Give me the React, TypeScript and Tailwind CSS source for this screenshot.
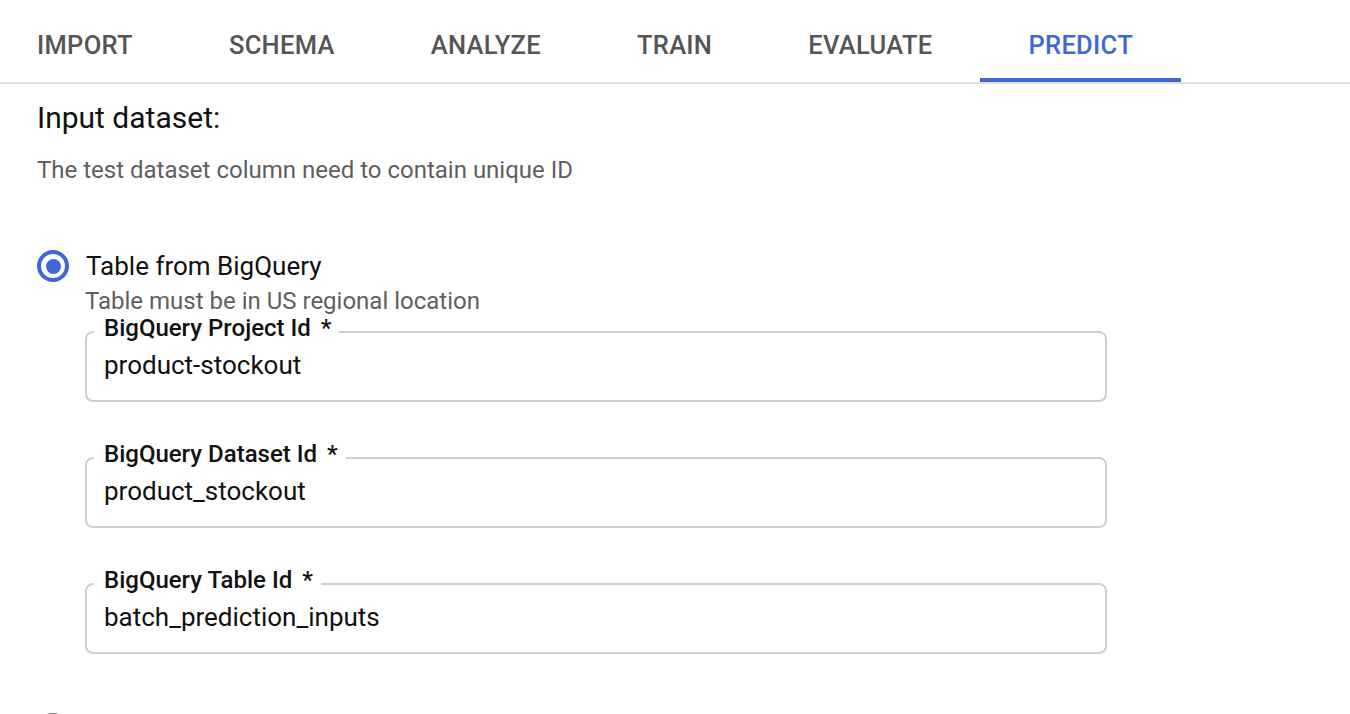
const tabs = ["IMPORT", "SCHEMA", "ANALYZE", "TRAIN", "EVALUATE", "PREDICT"];

const fields = [
  { label: "BigQuery Project Id", value: "product-stockout" },
  { label: "BigQuery Dataset Id", value: "product_stockout" },
  { label: "BigQuery Table Id", value: "batch_prediction_inputs" },
];

function Field({ label, value }: { label: string; value: string }) {
  return (
    <div className="relative h-[71px] w-[1022px] rounded-[8px] border-2 border-[#cfcfcf]">
      <div className="absolute left-[7px] top-[-19px] bg-white pl-[10px] pr-[8px] text-[24px] font-medium leading-[28px] text-[#111]">
        {label}
        <span className="ml-[10px]">*</span>
      </div>
      <div className="pl-[17px] pt-[16px] text-[26px] leading-[32px] text-[#111]">{value}</div>
    </div>
  );
}

export default function App() {
  return (
    <div className="h-[714px] w-[1350px] overflow-hidden bg-white font-['Roboto',sans-serif]">
      <div className="flex h-[84px] border-b-2 border-[#e0e0e0]">
        <div className="-ml-[11px] flex">
          {tabs.map((t) => {
            const active = t === "PREDICT";
            return (
              <div
                key={t}
                className={
                  active
                    ? "flex h-[82px] items-center border-b-4 border-[#3f68d2] px-[48px] pt-[12px] text-[25.5px] font-medium tracking-[0.3px] text-[#3f68d2]"
                    : "flex h-[82px] items-center border-b-4 border-transparent px-[48px] pt-[12px] text-[25.5px] font-medium tracking-[0.3px] text-[#555]"
                }
              >
                {t}
              </div>
            );
          })}
        </div>
      </div>

      <div className="px-[37px]">
        <h1 className="mt-[16px] text-[30px] leading-[36px] text-[#111]">Input dataset:</h1>
        <p className="mt-[19px] text-[24px] leading-[30px] text-[#5f5f5f]">
          The test dataset column need to contain unique ID
        </p>

        <div className="mt-[65px] flex items-center gap-[17px]">
          <div className="flex h-[32px] w-[32px] items-center justify-center rounded-full border-[4px] border-[#3f68d2]">
            <div className="h-[15px] w-[15px] rounded-full bg-[#3f68d2]" />
          </div>
          <span className="text-[26px] leading-[32px] text-[#111]">Table from BigQuery</span>
        </div>
        <p className="ml-[48px] mt-[4px] text-[24px] leading-[30px] text-[#5f5f5f]">
          Table must be in US regional location
        </p>

        <div className="ml-[48px] mt-[15px] flex flex-col gap-[55px]">
          {fields.map((f) => (
            <Field key={f.label} label={f.label} value={f.value} />
          ))}
        </div>

        <div className="mt-[59px] flex items-start gap-[17px]">
          <div className="h-[32px] w-[32px] rounded-full border-[4px] border-[#666]" />
          <span className="pt-[2px] text-[26px] leading-[32px] text-[#111]">Files from Cloud Storage</span>
        </div>
      </div>
    </div>
  );
}
